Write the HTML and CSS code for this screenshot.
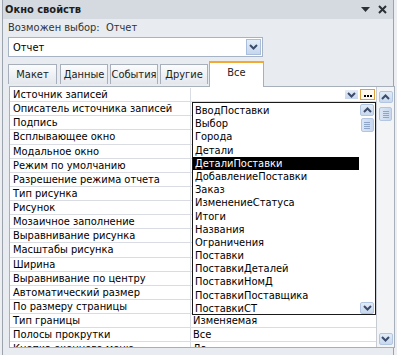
FILE: index.html
```html
<!DOCTYPE html>
<html>
<head>
<meta charset="utf-8">
<link rel="stylesheet" href="styles.css">
</head>
<body>
<div class="frame">
  <div class="titlebar">
    <span class="title">Окно свойств</span>
    <span class="tb-icons">
      <svg width="9" height="6" viewBox="0 0 9 6"><path d="M0 0H9L4.5 5Z" fill="#2b2f36"/></svg>
      <svg width="9" height="9" viewBox="0 0 9 9"><path d="M1 1L8 8M8 1L1 8" stroke="#2b2f36" stroke-width="2"/></svg>
    </span>
  </div>
  <div class="content">
    <div class="sel-label">Возможен выбор:&nbsp;&nbsp;Отчет</div>
    <div class="combo">
      <span class="combo-text">Отчет</span>
      <span class="dd-btn big"><svg width="9" height="6" viewBox="0 0 9 6"><path d="M1 1L4.5 4.5L8 1" fill="none" stroke="#3b4c6b" stroke-width="2"/></svg></span>
    </div>
    <div class="tabs">
      <div class="tab t1">Макет</div>
      <div class="tab t2">Данные</div>
      <div class="tab t3">События</div>
      <div class="tab t4">Другие</div>
      <div class="tab active">Все</div>
    </div>
    <div class="sheet">
      <div class="grid">
        <div class="lab">Источник записей</div>
        <div class="val first">
          <span class="dd-btn small"><svg width="9" height="6" viewBox="0 0 9 6"><path d="M1 1L4.5 4.5L8 1" fill="none" stroke="#3b4c6b" stroke-width="2"/></svg></span>
          <span class="ell"><i></i><i></i><i></i></span>
        </div>
        <div class="lab">Описатель источника записей</div><div class="val"></div>
        <div class="lab">Подпись</div><div class="val"></div>
        <div class="lab">Всплывающее окно</div><div class="val"></div>
        <div class="lab">Модальное окно</div><div class="val"></div>
        <div class="lab">Режим по умолчанию</div><div class="val"></div>
        <div class="lab">Разрешение режима отчета</div><div class="val"></div>
        <div class="lab">Тип рисунка</div><div class="val"></div>
        <div class="lab">Рисунок</div><div class="val"></div>
        <div class="lab">Мозаичное заполнение</div><div class="val"></div>
        <div class="lab">Выравнивание рисунка</div><div class="val"></div>
        <div class="lab">Масштабы рисунка</div><div class="val"></div>
        <div class="lab">Ширина</div><div class="val"></div>
        <div class="lab">Выравнивание по центру</div><div class="val"></div>
        <div class="lab">Автоматический размер</div><div class="val"></div>
        <div class="lab">По размеру страницы</div><div class="val"></div>
        <div class="lab">Тип границы</div><div class="val">Изменяемая</div>
        <div class="lab">Полосы прокрутки</div><div class="val">Все</div>
        <div class="lab">Кнопка оконного меню</div><div class="val">Да</div>
      </div>
      <div class="vscroll">
        <span class="sbtn up"><svg width="9" height="6" viewBox="0 0 9 6"><path d="M1 5L4.5 1.5L8 5" fill="none" stroke="#3b4c6b" stroke-width="2"/></svg></span>
        <span class="thumb"><i></i><i></i><i></i><i></i></span>
        <span class="spacer"></span>
        <span class="sbtn down"><svg width="9" height="6" viewBox="0 0 9 6"><path d="M1 1L4.5 4.5L8 1" fill="none" stroke="#3b4c6b" stroke-width="2"/></svg></span>
      </div>
      <div class="dropdown">
        <ul class="items">
          <li>ВводПоставки</li>
          <li>Выбор</li>
          <li>Города</li>
          <li>Детали</li>
          <li class="sel">ДеталиПоставки</li>
          <li>ДобавлениеПоставки</li>
          <li>Заказ</li>
          <li>ИзменениеСтатуса</li>
          <li>Итоги</li>
          <li>Названия</li>
          <li>Ограничения</li>
          <li>Поставки</li>
          <li>ПоставкиДеталей</li>
          <li>ПоставкиНомД</li>
          <li>ПоставкиПоставщика</li>
          <li>ПоставкиСТ</li>
        </ul>
        <div class="dscroll">
          <span class="sbtn up"><svg width="9" height="6" viewBox="0 0 9 6"><path d="M1 5L4.5 1.5L8 5" fill="none" stroke="#3b4c6b" stroke-width="2"/></svg></span>
          <span class="thumb"><i></i><i></i><i></i><i></i></span>
          <span class="spacer"></span>
          <span class="sbtn down"><svg width="9" height="6" viewBox="0 0 9 6"><path d="M1 1L4.5 4.5L8 1" fill="none" stroke="#3b4c6b" stroke-width="2"/></svg></span>
        </div>
      </div>
    </div>
  </div>
</div>
</body>
</html>
```
FILE: styles.css
```css
* { box-sizing: border-box; }
html, body { margin: 0; padding: 0; }
body {
  width: 397px;
  height: 355px;
  overflow: hidden;
  background: #eceef1;
  font-family: "DejaVu Sans Condensed", "DejaVu Sans", sans-serif;
  font-size: 11px;
  color: #000;
}
.frame {
  margin-left: 2px;
  width: 392px;
  height: 360px;
  border-left: 1px solid #9ba3ad;
  border-right: 1px solid #9ba3ad;
  background: #e8ecf1;
  display: flex;
  flex-direction: column;
}
.titlebar {
  height: 19px;
  background: #d5dae1;
  display: flex;
  align-items: center;
  justify-content: space-between;
  padding: 0 6px 0 2px;
}
.title { font-weight: bold; color: #1d1d1d; }
.tb-icons { display: flex; align-items: center; gap: 8px; }
.content { padding: 0 0 0 4px; display: flex; flex-direction: column; }
.sel-label { height: 18px; line-height: 16px; padding-left: 1px; padding-top: 1px; color: #333; }
.combo {
  margin-left: 1px;
  width: 255px;
  height: 20px;
  background: #fff;
  border: 1px solid #a6b3c4;
  display: flex;
  align-items: center;
  justify-content: space-between;
  padding: 0 1px 0 4px;
}
.dd-btn {
  display: flex;
  align-items: center;
  justify-content: center;
  background: linear-gradient(#e4edf8, #c5d6ee);
  border: 1px solid #a9bedc;
}
.dd-btn.big { width: 15px; height: 16px; }
.dd-btn.small { width: 13px; height: 9px; border: none; }
.tabs {
  margin-top: 3px;
  height: 26px;
  display: flex;
  align-items: flex-end;
  padding-left: 1px;
  position: relative;
  z-index: 1;
}
.tab {
  height: 20px;
  margin-bottom: 2px;
  width: 48px;
  margin-right: 2px;
  border: 1px solid #a7afba;
  border-bottom: none;
  background: linear-gradient(#fbfcfd, #e3e7ec);
  text-align: center;
  line-height: 19px;
  color: #222;
}
.tab.t1 { width: 49px; margin-right: 3px; }
.tab.t4 { margin-right: 1px; width: 48px; }
.tab.active {
  width: 55px;
  height: 26px;
  margin-bottom: -1px;
  background: #fff;
  border-top: 2px solid #f2a933;
  line-height: 20px;
}
.sheet {
  position: relative;
  margin-left: 2px;
  width: 386px;
  height: 262px;
  border: 1px solid #a7afba;
  background: #fff;
  display: flex;
  overflow: hidden;
}
.grid {
  width: 366px;
  display: grid;
  grid-template-columns: 181px 185px;
  grid-auto-rows: 14.13px;
  align-content: start;
  padding-top: 1px;
}
.lab, .val {
  border-bottom: 1px solid #d9dde3;
  line-height: 13px;
  white-space: nowrap;
  overflow: hidden;
}
.lab { padding-left: 3px; border-right: 1px solid #d9dde3; }
.val { padding-left: 2px; }
.val.first { display: flex; justify-content: flex-end; align-items: center; gap: 2px; padding-right: 1px; }
.ell {
  width: 15px;
  height: 11px;
  border: 1px solid #e0a03e;
  background: #fffaf0;
  display: flex;
  align-items: center;
  justify-content: center;
  gap: 1px;
  padding-top: 2px;
}
.ell i { display: block; width: 2px; height: 2px; background: #000; }
.vscroll, .dscroll {
  display: flex;
  flex-direction: column;
  align-items: center;
}
.vscroll {
  width: 19px;
  border-left: 1px solid #c7ccd3;
  background: #f3f4f6;
  padding-top: 4px;
  padding-bottom: 2px;
}
.sbtn {
  width: 14px;
  height: 12px;
  display: flex;
  align-items: center;
  justify-content: center;
  background: linear-gradient(#e2ebf7, #c8d8ee);
  border: 1px solid #b2c6e2;
  border-radius: 2px;
}
.thumb {
  margin-top: 4px;
  width: 13px;
  height: 14px;
  background: linear-gradient(90deg, #dbe6f5, #c7d7ee);
  border: 1px solid #b2c6e2;
  border-radius: 2px;
  display: flex;
  flex-direction: column;
  align-items: center;
  justify-content: center;
  gap: 1px;
}
.thumb i { display: block; width: 6px; height: 1px; background: #8da5c8; }
.spacer { flex: 1; }
.dropdown {
  position: absolute;
  left: 182px;
  top: 15px;
  width: 184px;
  height: 213px;
  border: 1px solid #1a1a1a;
  background: #fff;
  display: flex;
}
.items {
  list-style: none;
  margin: 0;
  padding: 1px 0 0 0;
  flex: 1;
}
.items li {
  height: 13.2px;
  line-height: 13px;
  padding-left: 2px;
  white-space: nowrap;
}
.items li.sel { background: #000; color: #fff; }
.dscroll {
  width: 16px;
  padding-top: 1px;
  padding-bottom: 0px;
}
.dscroll .thumb { margin-top: 2px; }
```
